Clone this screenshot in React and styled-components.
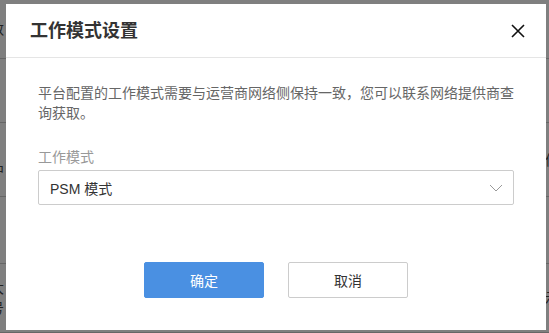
import styled, { createGlobalStyle } from 'styled-components'

const GlobalStyle = createGlobalStyle`
    html, body {
        margin: 0;
        padding: 0;
        width: 549px;
        height: 333px;
        overflow: hidden;
        font-family: "Liberation Sans", "Noto Sans CJK SC", sans-serif;
        background: #fff;
    }
`

const Page = styled.div`
    width: 549px;
    height: 333px;
    overflow: hidden;
    display: flex;
    flex-direction: column;
`

const BgRow = styled.div`
    height: ${(props) => props.h}px;
    border-bottom: 1px solid #ccc;
    display: flex;
    justify-content: space-between;
    align-items: center;
    margin: 0 -10px;
    font-size: 14px;
    color: #444;
    line-height: 20px;
`

const BgCell = styled.div`
    display: flex;
    flex-direction: column;
`

const Overlay = styled.div`
    position: fixed;
    inset: 0;
    background: rgba(0, 0, 0, 0.5);
`

const Dialog = styled.div`
    position: fixed;
    left: 6px;
    top: 4px;
    width: 540px;
    height: 326px;
    background: #fff;
    display: flex;
    flex-direction: column;
    box-sizing: border-box;
`

const Header = styled.div`
    height: 54px;
    box-sizing: border-box;
    border-bottom: 1px solid #e5e5e5;
    display: flex;
    align-items: center;
    justify-content: space-between;
    padding: 0 20px 0 24px;
`

const Title = styled.h2`
    margin: 0;
    font-size: 18px;
    font-weight: bold;
    color: #333;
    line-height: 24px;
`

const Close = styled.button`
    border: none;
    background: none;
    padding: 0;
    width: 16px;
    height: 16px;
    display: flex;
    align-items: center;
    justify-content: center;
    cursor: pointer;
`

const Body = styled.div`
    padding: 25px 32px 0 32px;
    display: flex;
    flex-direction: column;
`

const Desc = styled.p`
    margin: 0;
    font-size: 14px;
    line-height: 20px;
    color: #666;
`

const Label = styled.div`
    margin-top: 24px;
    font-size: 14px;
    line-height: 20px;
    color: #999;
`

const Select = styled.div`
    margin-top: 3px;
    height: 35px;
    box-sizing: border-box;
    border: 1px solid #ccc;
    border-radius: 2px;
    display: flex;
    align-items: center;
    justify-content: space-between;
    padding: 0 10px 0 11px;
    font-size: 14px;
    color: #333;
`

const Footer = styled.div`
    margin-top: 57px;
    display: flex;
    justify-content: center;
    gap: 24px;
`

const Button = styled.button`
    width: 120px;
    height: 36px;
    box-sizing: border-box;
    border-radius: 2px;
    font-family: inherit;
    font-size: 14px;
    cursor: pointer;
    border: 1px solid ${(props) => (props.primary ? '#4a90e2' : '#ccc')};
    background: ${(props) => (props.primary ? '#4a90e2' : '#fff')};
    color: ${(props) => (props.primary ? '#fff' : '#333')};
`

function App() {
    return (
        <>
            <GlobalStyle />
            <Page>
                <BgRow h={59}>
                    <BgCell>数</BgCell>
                    <BgCell></BgCell>
                </BgRow>
                <BgRow h={65}>
                    <BgCell></BgCell>
                </BgRow>
                <BgRow h={75}>
                    <BgCell>
                        <span>I(</span>
                        <span>中</span>
                    </BgCell>
                    <BgCell>信</BgCell>
                </BgRow>
                <BgRow h={67}>
                    <BgCell></BgCell>
                </BgRow>
                <BgRow h={70}>
                    <BgCell>
                        <span>大</span>
                        <span>号</span>
                    </BgCell>
                    <BgCell>示</BgCell>
                </BgRow>
            </Page>
            <Overlay />
            <Dialog>
                <Header>
                    <Title>工作模式设置</Title>
                    <Close aria-label="关闭">
                        <svg width="14" height="14" viewBox="0 0 14 14">
                            <path d="M1 1L13 13M13 1L1 13" stroke="#111" strokeWidth="1.6" />
                        </svg>
                    </Close>
                </Header>
                <Body>
                    <Desc>
                        平台配置的工作模式需要与运营商网络侧保持一致，您可以联系网络提供商查询获取。
                    </Desc>
                    <Label>工作模式</Label>
                    <Select>
                        <span>PSM 模式</span>
                        <svg width="14" height="8" viewBox="0 0 14 8">
                            <path d="M1 1L7 7L13 1" fill="none" stroke="#999" strokeWidth="1" />
                        </svg>
                    </Select>
                    <Footer>
                        <Button primary>确定</Button>
                        <Button>取消</Button>
                    </Footer>
                </Body>
            </Dialog>
        </>
    )
}

export default App
